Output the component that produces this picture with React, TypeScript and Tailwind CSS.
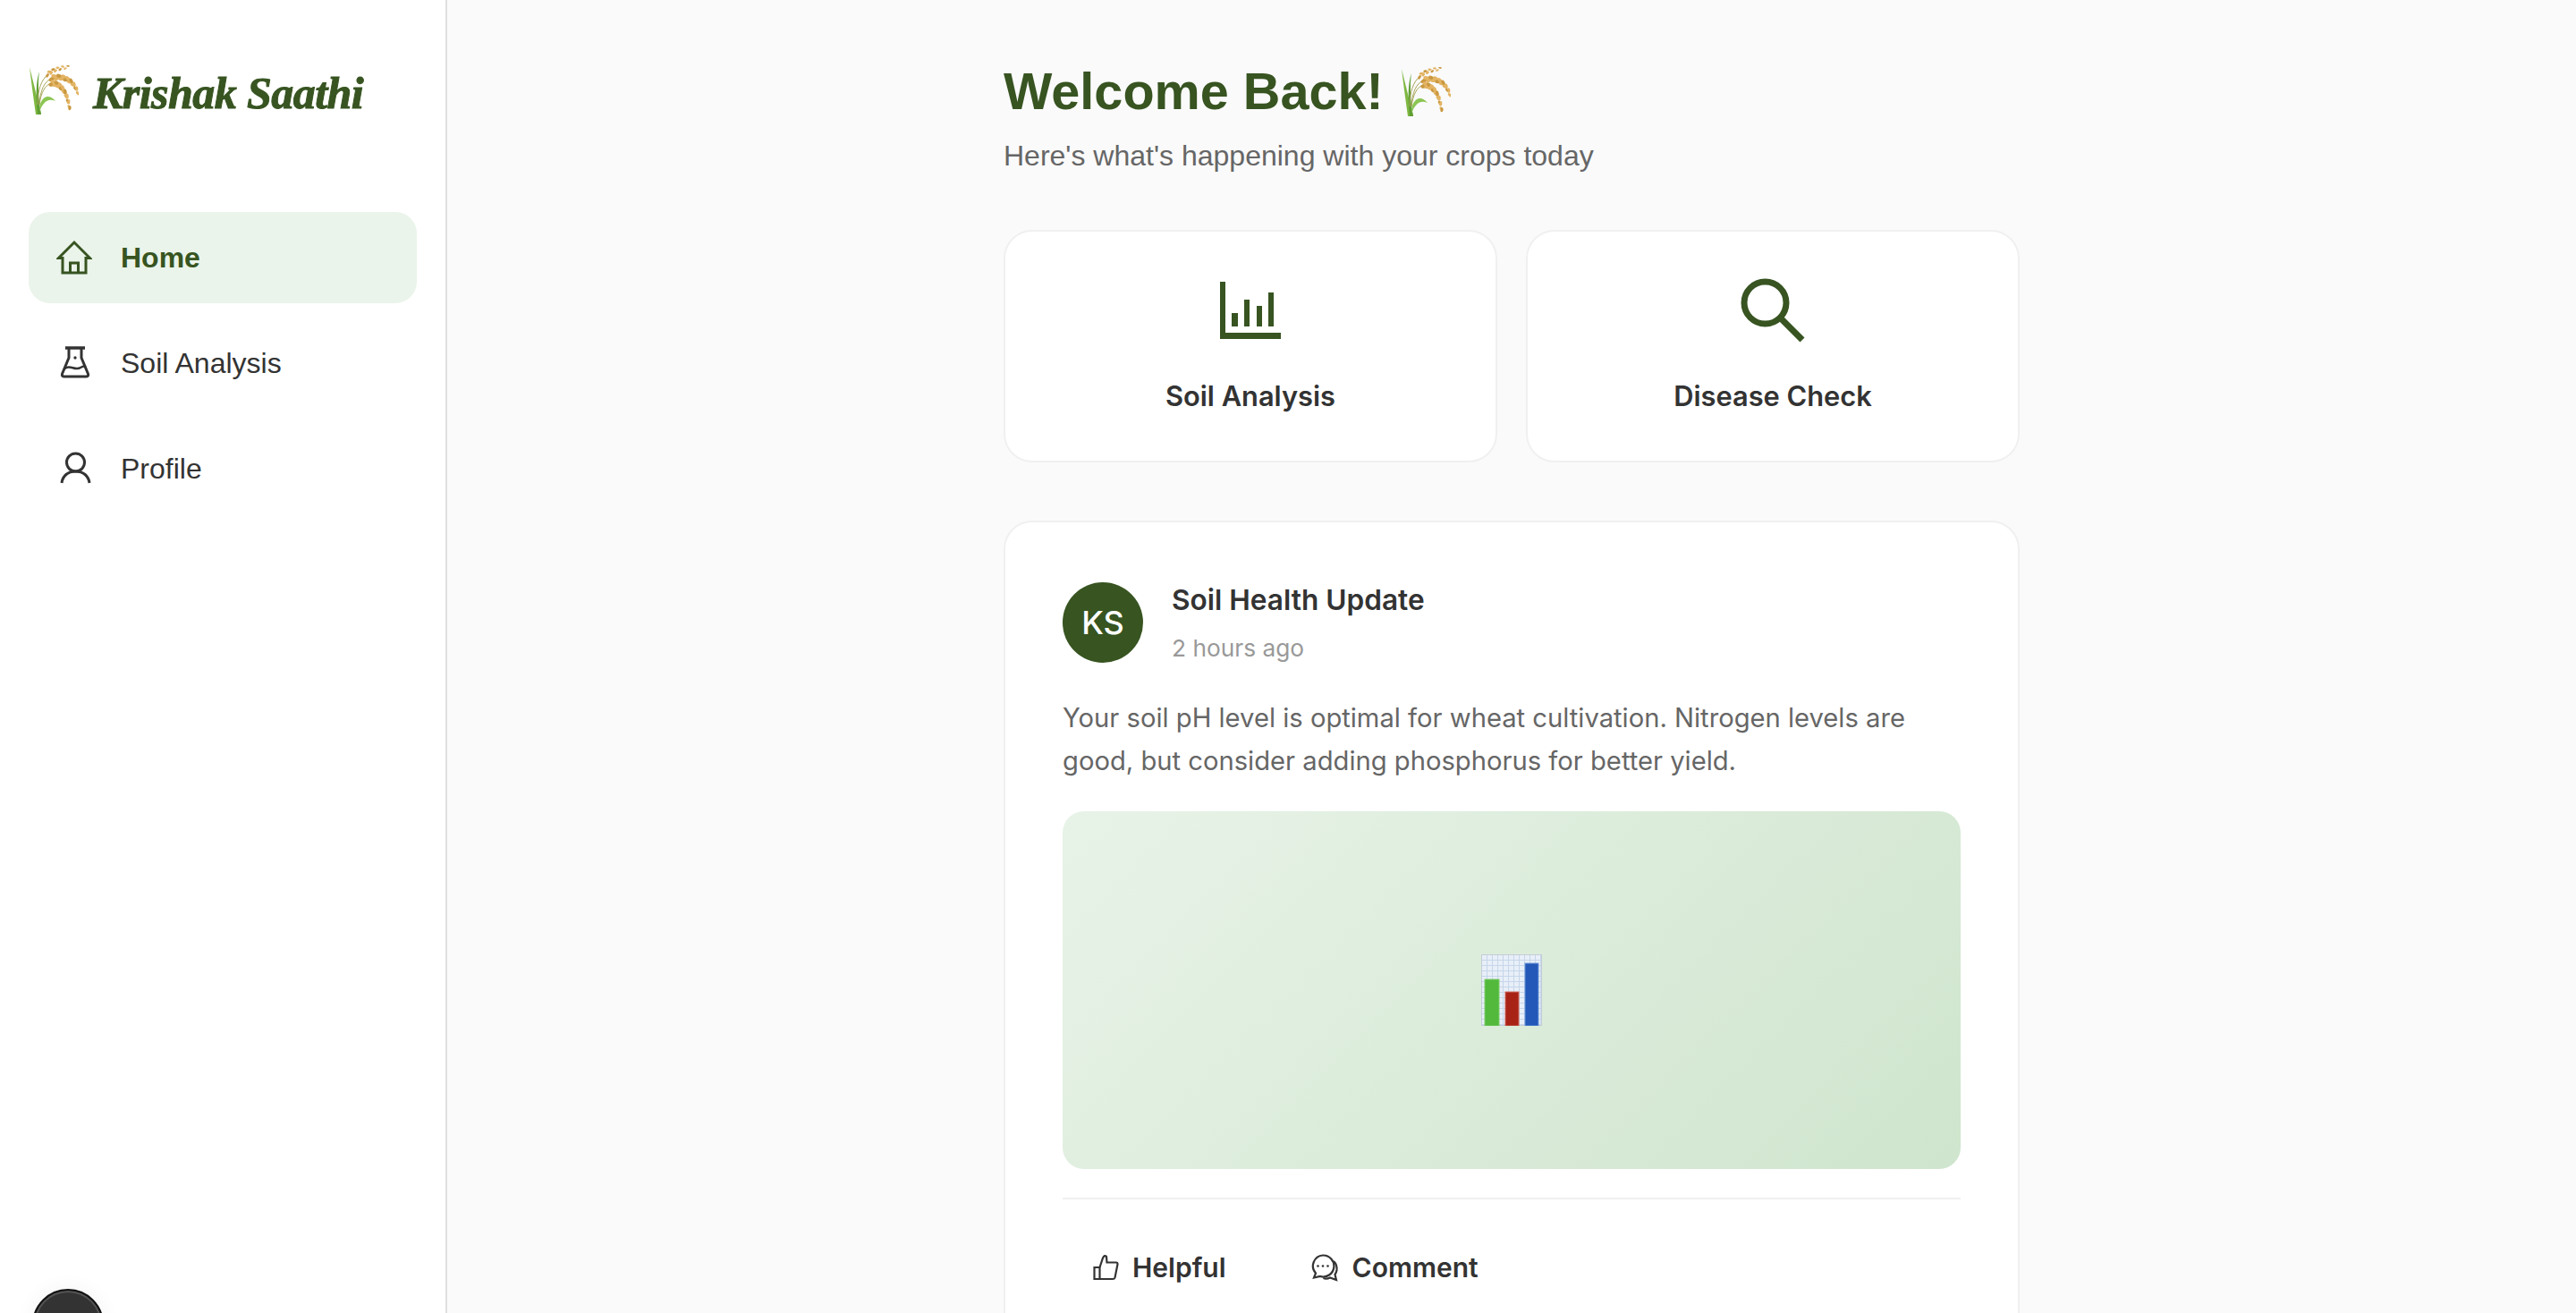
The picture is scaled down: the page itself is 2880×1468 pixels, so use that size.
import React from "react";

const green = "#375421";
const arial = "font-['Liberation_Sans',Arial,sans-serif]";
const inter = "font-['Inter',sans-serif]";

function earGrains(x0: number, y0: number, cx: number, cy: number, x1: number, y1: number, n: number, size: number) {
  const items = [];
  for (let i = 0; i < n; i++) {
    const t = i / (n - 1);
    const x = (1 - t) * (1 - t) * x0 + 2 * (1 - t) * t * cx + t * t * x1;
    const y = (1 - t) * (1 - t) * y0 + 2 * (1 - t) * t * cy + t * t * y1;
    const dx = 2 * (1 - t) * (cx - x0) + 2 * t * (x1 - cx);
    const dy = 2 * (1 - t) * (cy - y0) + 2 * t * (y1 - cy);
    const a = (Math.atan2(dy, dx) * 180) / Math.PI;
    const off = i % 2 === 0 ? 1.3 : -1.3;
    const r = size * (1 - 0.3 * t);
    items.push(
      <ellipse
        key={i}
        cx={x}
        cy={y + off}
        rx={r * 1.7}
        ry={r}
        transform={`rotate(${a + (off > 0 ? -20 : 20)} ${x} ${y + off})`}
        fill={i % 3 === 0 ? "#c9983f" : "#e3b464"}
      />
    );
  }
  return items;
}

function Wheat({ className }: { className: string }) {
  return (
    <svg viewBox="0 0 56 56" className={className}>
      <path d="M1 2 C3 18 5 34 8 55 L14 55 C10 38 5 18 1 2Z" fill="#7fb842" />
      <path d="M12 7 C8 18 8 36 10 55 L14 55 C11 38 10 20 12 7Z" fill="#5f9e34" />
      <path d="M30 40 C24 33 17 33 13 43 L12 52 C16 42 21 36 30 40Z" fill="#8cc653" />
      <path d="M10 44 C10 28 14 16 22 10" fill="none" stroke="#a8a65a" strokeWidth="1" />
      <path d="M12 44 C13 28 17 18 27 14" fill="none" stroke="#a8a65a" strokeWidth="1" />
      <path d="M12 44 C14 30 18 22 27 19" fill="none" stroke="#a8a65a" strokeWidth="1" />
      {earGrains(21, 10, 30, 3, 44, 2, 10, 1.5)}
      {earGrains(26, 14, 47, 10, 55, 30, 15, 2.2)}
      {earGrains(26, 20, 42, 21, 46, 49, 16, 2.2)}
    </svg>
  );
}

function HomeIcon() {
  return (
    <svg viewBox="0 0 40 40" fill="none" stroke={green} strokeWidth="3" className="h-10 w-10 shrink-0 -translate-x-px">
      <path d="M2.5 20.5 L20 3 L37.5 20.5 H33 V37 H7 V20.5 Z" />
      <path d="M15.5 37 V26 H24.5 V37" />
    </svg>
  );
}

function FlaskIcon() {
  return (
    <svg viewBox="0 0 40 40" fill="none" stroke="#333333" strokeWidth="3" className="h-10 w-10 shrink-0">
      <path d="M9 3 H31" strokeWidth="3.5" />
      <path d="M13 3 V14 L5.5 32 Q4.8 35 8 35 H32 Q35.2 35 34.5 32 L27 14 V3" strokeLinejoin="round" />
      <path d="M8.5 26 C14 21 20 29 26 25 C28.5 23.5 30 23 32 24" strokeWidth="2.5" />
      <circle cx="20" cy="14" r="1.7" fill="#333333" stroke="none" />
    </svg>
  );
}

function UserIcon() {
  return (
    <svg viewBox="0 0 40 40" fill="none" stroke="#333333" strokeWidth="3" className="h-10 w-10 shrink-0">
      <circle cx="20.5" cy="13" r="10" />
      <path d="M5 36 C6 28 12 23 20.5 23 C29 23 35 28 36 36" />
    </svg>
  );
}

function ChartIcon() {
  return (
    <svg viewBox="0 0 68 64" fill={green} className="h-16 w-[68px]">
      <rect x="0" y="0" width="6" height="64" />
      <rect x="0" y="57" width="68" height="7" />
      <rect x="13" y="35" width="7" height="15" />
      <rect x="27" y="20" width="6" height="30" />
      <rect x="41" y="27" width="6" height="23" />
      <rect x="54" y="12" width="6" height="38" />
    </svg>
  );
}

function SearchIcon() {
  return (
    <svg viewBox="0 0 72 72" fill="none" stroke={green} strokeWidth="7" className="h-[72px] w-[72px]">
      <circle cx="27.5" cy="27.5" r="23.5" />
      <path d="M44 44 L69 69" />
    </svg>
  );
}

function ThumbIcon() {
  return (
    <svg viewBox="0 0 32 32" fill="none" stroke="#333333" strokeWidth="2.2" className="h-8 w-8 shrink-0">
      <path d="M3.5 16 H9.5 V29 H3.5 Z" />
      <path d="M9.5 16 L13 5.5 Q15 1.5 17 4 L17.5 10.5 H28 Q29.5 10.5 29.5 12.5 L26.5 27.5 Q26 29 24 29 H9.5" />
    </svg>
  );
}

function ChatIcon() {
  return (
    <svg viewBox="0 0 32 32" fill="none" stroke="#333333" strokeWidth="2.2" className="h-8 w-8 shrink-0">
      <path d="M14 2.5 A12 12 0 1 1 11 26 L4 27.5 L6 22.5 A12 12 0 0 1 14 2.5 Z" />
      <path d="M26 9 A12 12 0 0 1 29.5 19 Q29 22 27.5 24 L29 30 L22 27.5 Q18 29.5 14.5 28" />
      <circle cx="8.5" cy="14.5" r="1.3" fill="#333333" stroke="none" />
      <circle cx="14" cy="14.5" r="1.3" fill="#333333" stroke="none" />
      <circle cx="19.5" cy="14.5" r="1.3" fill="#333333" stroke="none" />
    </svg>
  );
}

function BarEmoji() {
  return (
    <svg viewBox="0 0 68 80" className="h-20 w-[68px]">
      <defs>
        <pattern id="grid" width="6" height="6" patternUnits="userSpaceOnUse">
          <rect width="6" height="6" fill="#e9eff8" />
          <path d="M0 0 H6 M0 0 V6" stroke="#c6d6ea" strokeWidth="2" />
        </pattern>
      </defs>
      <rect width="68" height="80" fill="url(#grid)" />
      <rect x="0" y="0" width="68" height="80" fill="none" stroke="#c4ccd8" strokeWidth="2" />
      <rect x="4" y="28" width="16" height="52" fill="#52b93c" stroke="#7fcd6a" />
      <rect x="27" y="42" width="15" height="38" fill="#a82316" stroke="#cf6a5f" />
      <rect x="49" y="10" width="15" height="70" fill="#2358b8" stroke="#6d97d8" />
    </svg>
  );
}

function NavItem({ icon, label, active }: { icon: React.ReactNode; label: string; active?: boolean }) {
  return (
    <div
      className={`flex h-[102px] items-center gap-[31px] rounded-3xl px-8 text-[32px] ${
        active ? "bg-[#eaf4ea] font-bold text-[#375421]" : "text-[#333333]"
      }`}
    >
      {icon}
      <span>{label}</span>
    </div>
  );
}

function QuickCard({ icon, label }: { icon: React.ReactNode; label: string }) {
  return (
    <div className="flex h-[260px] flex-col items-center rounded-[32px] border-2 border-[#f0f0f0] bg-white pt-[50px]">
      <div className="flex h-[76px] items-center justify-center">{icon}</div>
      <div className={`mt-[35px] text-[30.8px] font-semibold text-[#333333] ${inter}`}>{label}</div>
    </div>
  );
}

export default function App() {
  return (
    <div className={`flex h-screen w-full overflow-hidden bg-[#fafafa] ${arial}`}>
      <aside className="relative flex w-[500px] shrink-0 flex-col border-r-2 border-[#e0e0e0] bg-white px-8">
        <div className="mt-[73px] flex h-[55px] items-center gap-4">
          <Wheat className="h-[56px] w-[56px] shrink-0" />
          <span className="mt-[8px] whitespace-nowrap font-['Liberation_Serif',serif] text-[50px] font-bold italic tracking-[-0.55px] text-[#375421] [-webkit-text-stroke:1px_#375421]">
            Krishak Saathi
          </span>
        </div>
        <nav className="mt-[109px] flex flex-col gap-4">
          <NavItem icon={<HomeIcon />} label="Home" active />
          <NavItem icon={<FlaskIcon />} label="Soil Analysis" />
          <NavItem icon={<UserIcon />} label="Profile" />
        </nav>
        <div className="absolute left-9 top-[1441px] h-20 w-20 rounded-full border-2 border-[#111] bg-[#333] shadow-[inset_0_0_0_2px_#555,0_0_24px_rgba(0,0,0,0.05)]" />
      </aside>

      <main className="flex min-w-0 flex-1 justify-center">
        <div className="flex w-[1136px] flex-col pt-[74px]">
          <h1 className="flex h-[64px] items-center text-[57.6px] font-bold leading-none text-[#375421]">
            Welcome Back!
            <Wheat className="ml-[19px] h-[56px] w-[56px]" />
          </h1>
          <p className="mt-[18px] text-[32px] leading-[48px] text-[#666666]">Here's what's happening with your crops today</p>

          <div className="mt-[59px] grid grid-cols-2 gap-8">
            <QuickCard icon={<ChartIcon />} label="Soil Analysis" />
            <QuickCard icon={<SearchIcon />} label="Disease Check" />
          </div>

          <article className={`mt-[65px] rounded-[32px] border-2 border-[#f0f0f0] bg-white px-16 pt-[67px] ${inter}`}>
            <div className="flex gap-8">
              <div className="flex h-[90px] w-[90px] shrink-0 items-center justify-center rounded-full bg-[#375421] text-[36px] font-medium text-white">
                KS
              </div>
              <div className="flex flex-col">
                <div className="-mt-[2px] text-[31.6px] font-semibold leading-[44px] text-[#333333]">Soil Health Update</div>
                <div className="mt-3 text-[26.3px] leading-[40px] text-[#999999]">2 hours ago</div>
              </div>
            </div>
            <p className="mt-[34px] text-[29.2px] leading-[48px] text-[#666666]">
              Your soil pH level is optimal for wheat cultivation. Nitrogen levels are good, but consider adding phosphorus for better yield.
            </p>
            <div className="mt-[32px] flex h-[400px] items-center justify-center rounded-3xl bg-[linear-gradient(135deg,#e8f3e8,#cfe5cd)]">
              <BarEmoji />
            </div>
            <div className="mt-8 flex border-t-2 border-[#f0f0f0] px-8 pb-16 pt-[54px]">
              <button className="flex items-center gap-[14px] text-[30px] font-semibold text-[#333333]">
                <ThumbIcon />
                Helpful
              </button>
              <button className="ml-[94px] flex items-center gap-[15px] text-[30px] font-semibold text-[#333333]">
                <ChatIcon />
                Comment
              </button>
            </div>
          </article>
        </div>
      </main>
    </div>
  );
}
